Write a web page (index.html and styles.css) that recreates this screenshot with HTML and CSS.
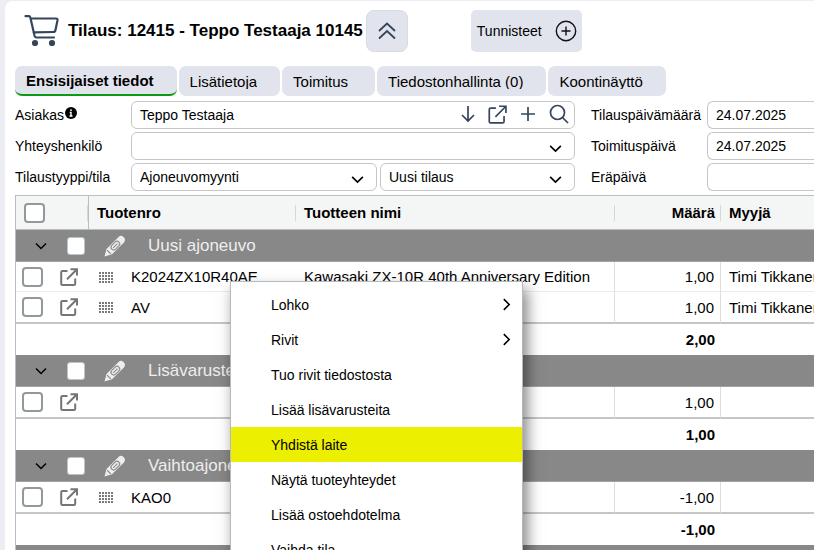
FILE: index.html
```html
<!DOCTYPE html>
<html lang="fi">
<head>
  <meta charset="UTF-8">
  <title>Tilaus 12415</title>
  <link rel="stylesheet" href="styles.css">
</head>
<body>

  <!-- shared icons -->
  <svg class="sprite" aria-hidden="true">
    <symbol id="chevron" viewBox="0 0 14 14"><path d="M2 4.500 7 9.500l5-5" fill="none" stroke="currentColor" stroke-width="1.500"/></symbol>
    <symbol id="open" viewBox="0 0 18 18"><path d="M7.500 3H2.500Q1.200 3 1.200 4.300v11.400Q1.200 17 2.500 17h11.400q1.300 0 1.300-1.300V10.500M10.500 1.200H17v6.300M17 1.200 7 11.200" fill="none" stroke="currentColor" stroke-width="var(--stroke, 1.600)"/></symbol>
    <symbol id="grip" viewBox="0 0 14 12"><path d="M1 1v11M4 1v11M7 1v11M10 1v11M13 1v11" fill="none" stroke="#222" stroke-width="1.200" stroke-dasharray="2 1"/></symbol>
    <symbol id="pencil" viewBox="0 0 22 22">
      <path d="M.5 21.500 2.500 14 14.800 1.800Q17-.2 19.500 2T20.200 7.200L8 19.300z" fill="#eee"/>
      <g transform="rotate(-45 11 11)" fill="none" stroke="#888" stroke-width="1.100">
        <rect x="6.500" y="8.300" width="10" height="5.400" rx="2.700"/>
        <path d="M8.500 11h6M2.500 8.500v5"/>
      </g>
    </symbol>
  </svg>

  <main class="panel">
    <header class="header">
      <svg class="cart" viewBox="0 0 36 32" fill="none" stroke="#36455c" stroke-width="2.200" stroke-linecap="round" stroke-linejoin="round">
        <path d="M1.500 1.200H5q1 0 1.400 1.500l4.200 18.300q.4 1.500 2 1.500H30M7 3.500h25q1.800 0 1.500 1.800L31.500 15q-.4 2-2.200 2L9.500 17.300"/>
        <circle cx="11" cy="28" r="2" fill="#36455c"/>
        <circle cx="28" cy="28" r="2" fill="#36455c"/>
      </svg>
      <h1>Tilaus: 12415 - Teppo Testaaja 10145</h1>
      <button class="collapse" type="button" aria-label="Piilota">
        <svg width="20" height="20" viewBox="0 0 20 20" fill="none" stroke="#36455c" stroke-width="1.800"><path d="M2 10l8-7.500 8 7.500M2 17.500l8-7.500 8 7.500"/></svg>
      </button>
      <button class="tags" type="button">Tunnisteet
        <svg width="22" height="22" viewBox="0 0 22 22" fill="none" stroke="#111" stroke-width="1.400"><circle cx="11" cy="11" r="9.700"/><path d="M11 6.500v9M6.500 11h9"/></svg>
      </button>
    </header>

    <nav class="tabs">
      <button class="tab active" type="button"><span>Ensisijaiset tiedot</span></button>
      <button class="tab" type="button"><span>Lisätietoja</span></button>
      <button class="tab" type="button"><span>Toimitus</span></button>
      <button class="tab" type="button"><span>Tiedostonhallinta (0)</span></button>
      <button class="tab" type="button"><span>Koontinäyttö</span></button>
    </nav>

    <form class="form">
      <label for="customer">Asiakas<svg class="info" width="12" height="12" viewBox="0 0 12 12"><circle cx="6" cy="6" r="6"/><path d="M6 2.200v1.700M4.700 5.500H6v3.400M4.500 9h3" stroke="#fff" stroke-width="1.400" fill="none"/></svg></label>
      <div class="field">
        <input type="text" id="customer" value="Teppo Testaaja">
        <div class="actions">
          <button type="button" aria-label="Hae alas"><svg width="14" height="18" viewBox="0 0 14 18"><path d="M7 1v15M1 10l6 6 6-6"/></svg></button>
          <button type="button" aria-label="Avaa"><svg width="19" height="19"><use href="#open"/></svg></button>
          <button type="button" aria-label="Lisää"><svg width="16" height="16" viewBox="0 0 16 16"><path d="M8 1v14M1 8h14"/></svg></button>
          <button type="button" aria-label="Etsi"><svg width="20" height="20" viewBox="0 0 20 20"><circle cx="8.500" cy="8.500" r="7"/><path d="m13.500 13.500 5.500 5.500"/></svg></button>
        </div>
      </div>
      <label for="orderDate">Tilauspäivämäärä</label>
      <input type="text" id="orderDate" value="24.07.2025">

      <label for="contact">Yhteyshenkilö</label>
      <div class="field">
        <select id="contact"><option></option></select>
        <svg class="arrow"><use href="#chevron"/></svg>
      </div>
      <label for="deliveryDate">Toimituspäivä</label>
      <input type="text" id="deliveryDate" value="24.07.2025">

      <label for="orderType">Tilaustyyppi/tila</label>
      <div class="pair">
        <div class="field">
          <select id="orderType"><option>Ajoneuvomyynti</option></select>
          <svg class="arrow"><use href="#chevron"/></svg>
        </div>
        <div class="field">
          <select id="orderState" aria-label="Tila"><option>Uusi tilaus</option></select>
          <svg class="arrow"><use href="#chevron"/></svg>
        </div>
      </div>
      <label for="dueDate">Eräpäivä</label>
      <input type="text" id="dueDate">
    </form>

    <table class="rows">
      <colgroup>
        <col class="col-tools"><col class="col-code"><col class="col-name"><col class="col-amount"><col>
      </colgroup>
      <thead>
        <tr>
          <th class="tools"><input type="checkbox" aria-label="Valitse kaikki"></th>
          <th>Tuotenro</th>
          <th>Tuotteen nimi</th>
          <th class="num">Määrä</th>
          <th>Myyjä</th>
        </tr>
      </thead>
      <tbody>
        <tr class="group">
          <td colspan="5"><div><svg class="toggle"><use href="#chevron"/></svg><input type="checkbox" aria-label="Uusi ajoneuvo"><svg class="pencil"><use href="#pencil"/></svg><span>Uusi ajoneuvo</span></div></td>
        </tr>
        <tr class="item">
          <td class="tools"><div><input type="checkbox" aria-label="K2024ZX10R40AE"><svg class="open"><use href="#open"/></svg></div></td>
          <td><div class="code"><svg class="grip"><use href="#grip"/></svg>K2024ZX10R40AE</div></td>
          <td>Kawasaki ZX-10R 40th Anniversary Edition</td>
          <td class="num">1,00</td>
          <td>Timi Tikkanen</td>
        </tr>
        <tr class="item last">
          <td class="tools"><div><input type="checkbox" aria-label="AV"><svg class="open"><use href="#open"/></svg></div></td>
          <td><div class="code"><svg class="grip"><use href="#grip"/></svg>AV</div></td>
          <td></td>
          <td class="num">1,00</td>
          <td>Timi Tikkanen</td>
        </tr>
        <tr class="total"><td colspan="3"></td><td class="num">2,00</td><td></td></tr>
      </tbody>
      <tbody>
        <tr class="group">
          <td colspan="5"><div><svg class="toggle"><use href="#chevron"/></svg><input type="checkbox" aria-label="Lisävarusteet"><svg class="pencil"><use href="#pencil"/></svg><span>Lisävarusteet</span></div></td>
        </tr>
        <tr class="item last">
          <td class="tools"><div><input type="checkbox" aria-label="Rivi"><svg class="open"><use href="#open"/></svg></div></td>
          <td></td>
          <td></td>
          <td class="num">1,00</td>
          <td></td>
        </tr>
        <tr class="total"><td colspan="3"></td><td class="num">1,00</td><td></td></tr>
      </tbody>
      <tbody>
        <tr class="group">
          <td colspan="5"><div><svg class="toggle"><use href="#chevron"/></svg><input type="checkbox" aria-label="Vaihtoajoneuvo"><svg class="pencil"><use href="#pencil"/></svg><span>Vaihtoajoneuvo</span></div></td>
        </tr>
        <tr class="item last">
          <td class="tools"><div><input type="checkbox" aria-label="KAO0"><svg class="open"><use href="#open"/></svg></div></td>
          <td><div class="code"><svg class="grip"><use href="#grip"/></svg>KAO0</div></td>
          <td></td>
          <td class="num">-1,00</td>
          <td></td>
        </tr>
        <tr class="total"><td colspan="3"></td><td class="num">-1,00</td><td></td></tr>
      </tbody>
      <tbody>
        <tr class="group">
          <td colspan="5"><div><svg class="toggle"><use href="#chevron"/></svg><input type="checkbox" aria-label="Ryhmä"><svg class="pencil"><use href="#pencil"/></svg></div></td>
        </tr>
      </tbody>
    </table>
  </main>

  <div class="menu">
    <button type="button">Lohko <svg><use href="#chevron"/></svg></button>
    <button type="button">Rivit <svg><use href="#chevron"/></svg></button>
    <button type="button">Tuo rivit tiedostosta</button>
    <button type="button">Lisää lisävarusteita</button>
    <button type="button" class="highlight">Yhdistä laite</button>
    <button type="button">Näytä tuoteyhteydet</button>
    <button type="button">Lisää ostoehdotelma</button>
    <button type="button">Vaihda tila</button>
  </div>

</body>
</html>
```
FILE: styles.css
```css
* {
  box-sizing: border-box;
}

body {
  margin: 0;
  height: 100vh;
  overflow: hidden;
  position: relative;
  font-family: "Liberation Sans", Arial, sans-serif;
  font-size: 14px;
  color: #000;
  background: #edeef3;
}

button, input, select {
  font: inherit;
  color: inherit;
}

button {
  border: none;
  padding: 0;
  background: none;
  cursor: pointer;
}

.sprite {
  display: none;
}

.panel {
  margin: 1px 0 0 5px;
  padding: 9px 0 0 10px;
  min-height: 100%;
  background: #fff;
  border-top-left-radius: 8px;
}

/* header */
.header {
  display: flex;
  align-items: center;
  height: 42px;
  padding-left: 9px;
}

.cart {
  width: 36px;
  height: 32px;
  margin-right: 8px;
}

h1 {
  margin: 0 3px 0 0;
  font-size: 17px;
  white-space: nowrap;
}

.collapse {
  display: flex;
  align-items: center;
  justify-content: center;
  width: 42px;
  height: 42px;
  background: #e1e4ec;
  border: 1px solid #d9dbe0;
  border-radius: 8px;
}

.tags {
  display: flex;
  align-items: center;
  gap: 13px;
  height: 42px;
  margin-left: 63px;
  padding: 0 5px 0 6px;
  background: #e1e4ec;
  border-radius: 5px;
}

/* tabs */
.tabs {
  display: flex;
  gap: 2px;
  margin-top: 14px;
}

.tab {
  height: 30px;
  min-width: 93px;
  padding: 0 23px 0 11px;
  background: #e1e4ec;
  border-radius: 7px;
  font-size: 15px;
  text-align: left;
}

.tab span {
  display: block;
  height: 16px;
  line-height: 18px;
  overflow: hidden;
  white-space: nowrap;
}

.tab.active {
  padding-top: 2px;
  font-weight: bold;
  border-bottom: 2px solid #0c9a17;
}

.tab.active span {
  height: 18px;
}

/* form */
.form {
  display: grid;
  grid-template-columns: 116px 444px 132px minmax(120px, 1fr);
  grid-auto-rows: 28px;
  row-gap: 3px;
  align-items: center;
  margin-top: 5px;
}

.form > label:nth-of-type(even) {
  padding-left: 16px;
}

.info {
  margin: 0 0 1px 1px;
}

.form input, .form select {
  width: 100%;
  height: 28px;
  padding: 0 8px;
  border: 1px solid #c6c6c8;
  border-radius: 6px;
  background: #fff;
  outline: none;
}

.form select {
  appearance: none;
}

.form > input {
  border-right: none;
  border-radius: 6px 0 0 6px;
}

.field {
  position: relative;
}

.pair {
  display: grid;
  grid-template-columns: 246px 1fr;
  gap: 3px;
}

.actions {
  position: absolute;
  right: 6px;
  top: 3px;
  display: flex;
  align-items: center;
  gap: 13px;
}

.actions button {
  display: flex;
  color: #36455c;
}

.actions svg {
  fill: none;
  stroke: #36455c;
  stroke-width: 1.7;
}

.arrow {
  position: absolute;
  right: 12px;
  top: 9px;
  width: 15px;
  height: 15px;
  pointer-events: none;
}

/* order rows */
.rows {
  width: 100%;
  margin-top: 4px;
  table-layout: fixed;
  border-spacing: 0;
  border: 1px solid #b9bec2;
  border-width: 1px 0 0 1px;
  font-size: 15px;
}

.col-tools { width: 73px; }
.col-code { width: 207px; }
.col-name { width: 319px; }
.col-amount { width: 106px; }

.rows th, .rows td {
  padding: 0 8px;
  text-align: left;
  white-space: nowrap;
  overflow: hidden;
}

.rows td:last-child, .rows th:last-child {
  padding: 0 0 0 8px;
}

.rows .num {
  padding: 0 6px;
  text-align: right;
}

.rows th {
  height: 34px;
  border-bottom: 1px solid #b9bec2;
  background: linear-gradient(#d5d8da, #d5d8da) right center / 1px 16px no-repeat #f4f6f5;
}

.rows th:last-child {
  background: #f4f6f5;
}

.rows th.tools {
  border-right: 1px solid #b9bec2;
}

.rows input {
  appearance: none;
  flex: none;
  width: 21px;
  height: 20px;
  margin: 0;
  border: 2px solid #92999d;
  border-radius: 4px;
  background: #fff;
  vertical-align: middle;
}

.rows .tools {
  padding: 0 6px;
}

.rows th.tools {
  padding-left: 8px;
}

.tools div, .code, .group div {
  display: flex;
  align-items: center;
}

.item td {
  height: 30px;
  border-bottom: 1px solid #ebeced;
}

.item td:nth-child(3), .item td:nth-child(4) {
  border-right: 1px solid #dcdee0;
}

.item.last td {
  height: 32px;
  border-bottom: 2px solid #c6c6c6;
}

.open {
  width: 18px;
  height: 18px;
  margin-left: 17px;
  color: #757575;
  --stroke: 2;
}

.grip {
  width: 14px;
  height: 12px;
  margin: 0 18px 0 2px;
}

.total td {
  height: 31px;
  font-weight: bold;
}

.rows .group td {
  height: 32px;
  padding: 0 0 0 18px;
  background: #888;
  border-bottom: 1px solid #a2a2a2;
  color: #eee;
  font-size: 17px;
}

.toggle {
  width: 14px;
  height: 14px;
  color: #000;
}

.group input {
  width: 18px;
  height: 18px;
  margin: 0 19px;
  border: 1px solid #b9c4cc;
  border-radius: 3px;
}

.pencil {
  width: 22px;
  height: 22px;
  margin-right: 22px;
}

/* context menu */
.menu {
  position: absolute;
  left: 230px;
  top: 281px;
  width: 293px;
  padding: 5px 0;
  background: #fff;
  border: 1px solid #b5babd;
  box-shadow: 4px 8px 14px rgba(0, 0, 0, 0.5);
}

.menu button {
  display: flex;
  align-items: center;
  justify-content: space-between;
  width: 100%;
  height: 35px;
  padding: 0 8px 0 40px;
  text-align: left;
}

.menu svg {
  width: 15px;
  height: 15px;
  transform: rotate(-90deg);
}

.menu .highlight {
  background: #ecef00;
}
```
